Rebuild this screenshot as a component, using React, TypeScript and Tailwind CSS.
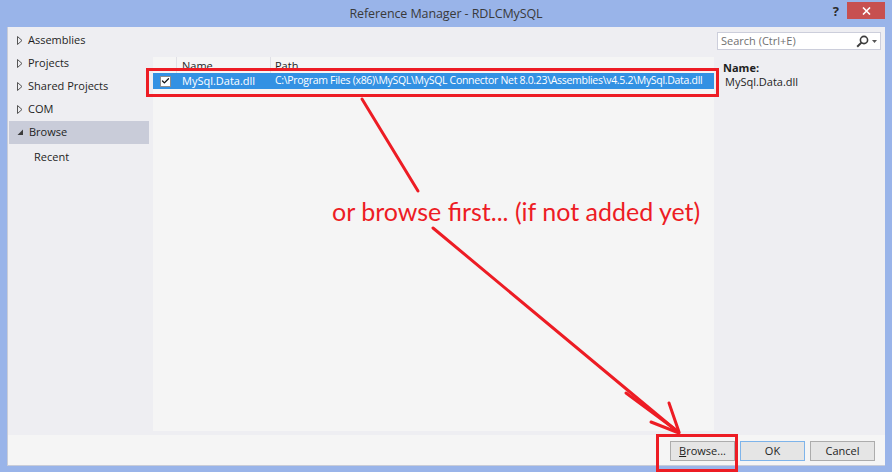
import { Check } from "lucide-react";

const uiFont = { fontFamily: '"Open Sans", "Noto Sans", sans-serif' };

const navItems = [
  { label: "Assemblies", open: false },
  { label: "Projects", open: false },
  { label: "Shared Projects", open: false },
  { label: "COM", open: false },
  { label: "Browse", open: true, selected: true },
];

function Caret({ open }: { open: boolean }) {
  if (open) {
    return (
      <svg width="7" height="7" viewBox="0 0 7 7" className="shrink-0">
        <polygon points="6,0.5 6,6 0.5,6" fill="#3c3c3c" />
      </svg>
    );
  }
  return (
    <svg width="6" height="9" viewBox="0 0 6 9" className="shrink-0">
      <polygon points="0.5,0.5 5,4.5 0.5,8.5" fill="none" stroke="#555" strokeWidth="1" />
    </svg>
  );
}

function SearchIcon() {
  return (
    <svg width="13" height="13" viewBox="0 0 13 13">
      <circle cx="8" cy="5" r="3.6" fill="none" stroke="#3c3c3c" strokeWidth="1.6" />
      <line x1="5.4" y1="7.6" x2="1.2" y2="11.8" stroke="#3c3c3c" strokeWidth="2" />
    </svg>
  );
}

function Btn({ label, def, underline }: { label: string; def?: boolean; underline?: string }) {
  return (
    <div
      className={`flex h-[20px] w-[65px] items-center justify-center border text-[11px] text-[#1e1e1e] ${
        def ? "border-[#7eb4ea] bg-[#e5e5e5]" : "border-[#acacac] bg-[#e5e5e5]"
      }`}
    >
      {underline ? (
        <span>
          <span className="underline">{underline}</span>
          {label.slice(underline.length)}
        </span>
      ) : (
        label
      )}
    </div>
  );
}

export default function App() {
  return (
    <div
      className="relative flex h-[472px] w-[892px] flex-col overflow-hidden bg-[#99b4e9] px-[7px] pb-[7px]"
      style={uiFont}
    >
      {/* title bar */}
      <div className="grid h-[27px] shrink-0 grid-cols-[1fr_auto_1fr]">
        <div />
        <div className="pt-[5px] text-[12.5px] tracking-[-0.1px] text-[#3a3a3a]">Reference Manager - RDLCMySQL</div>
        <div className="flex items-start justify-end">
          <span className="mr-[8px] mt-[2px] text-[13px] font-bold text-[#2b2b2b]">?</span>
          <div className="mt-[2px] flex h-[17px] w-[38px] items-center justify-center bg-[#c75050]">
            <svg width="9" height="8" viewBox="0 0 9 8">
              <path d="M1 0.5 L8 7.5 M8 0.5 L1 7.5" stroke="#fff" strokeWidth="1.6" />
            </svg>
          </div>
        </div>
      </div>

      {/* client */}
      <div className="flex flex-1 flex-col border-b border-l border-[#c8ccd8] bg-[#eeeef2]">
        <div className="flex flex-1">
          {/* sidebar */}
          <div className="w-[141px] shrink-0 pt-[2px] text-[11px] text-[#1e1e1e]">
            {navItems.map((item) => (
              <div
                key={item.label}
                className={`ml-[1px] flex h-[23px] items-center gap-[5px] pl-[8px] ${
                  item.selected ? "bg-[#c9ccd9]" : ""
                }`}
              >
                <Caret open={item.open} />
                <span>{item.label}</span>
              </div>
            ))}
            <div className="flex h-[26px] items-center pl-[26px]">Recent</div>
          </div>

          {/* main */}
          <div className="flex flex-1 flex-col pl-[4px]">
            <div className="flex h-[30px] shrink-0 justify-end pr-[4px] pt-[5px]">
              <div className="flex h-[18px] w-[164px] items-center justify-between border border-[#cccedb] bg-white pl-[3px] pr-[3px] text-[11px] text-[#717171]">
                <span>Search (Ctrl+E)</span>
                <div className="flex items-center gap-[3px]">
                  <SearchIcon />
                  <svg width="5" height="3" viewBox="0 0 5 3">
                    <polygon points="0,0 5,0 2.5,3" fill="#555" />
                  </svg>
                </div>
              </div>
            </div>

            <div className="flex h-[374px]">
              {/* list */}
              <div className="w-[561px] shrink-0 bg-[#f5f5f5] text-[11px]">
                <div className="flex h-[16px] text-[#1e1e1e]">
                  <div className="w-[24px] shrink-0 border-r border-[#e0e0e6]" />
                  <div className="w-[94px] shrink-0 border-r border-[#e0e0e6] pl-[5px] leading-[18px]">Name</div>
                  <div className="pl-[4px] leading-[18px]">Path</div>
                </div>
                <div className="relative flex h-[16px] items-center bg-[#3391e3] text-white">
                  <div className="flex w-[24px] shrink-0 justify-center pl-[1px]">
                    <div className="flex h-[11px] w-[11px] items-center justify-center border border-[#8e8e8e] bg-white">
                      <Check size={10} strokeWidth={3.5} color="#111" />
                    </div>
                  </div>
                  <div className="w-[94px] shrink-0 pl-[5px]">MySql.Data.dll</div>
                  <div className="shrink-0 whitespace-nowrap pl-[4px] text-[10.5px] tracking-[-0.3px]">
                    C:\Program Files (x86)\MySQL\MySQL Connector Net 8.0.23\Assemblies\v4.5.2\MySql.Data.dll
                  </div>
                  <div className="pointer-events-none absolute -bottom-[8px] -left-[7px] -right-[5px] -top-[5px] border-[3px] border-[#ed1c24]" />
                </div>
              </div>

              {/* details */}
              <div className="flex-1 pl-[9px] pt-[4px] text-[11px] leading-[14px] text-[#1e1e1e]">
                <div className="font-bold">Name:</div>
                <div className="pl-[2px]">MySql.Data.dll</div>
              </div>
            </div>
          </div>
        </div>

        {/* bottom bar */}
        <div className="mt-[4px] flex h-[30px] shrink-0 justify-end gap-[5px] bg-[#f5f5f5] pr-[10px] pt-[6px]">
          <div className="relative">
            <Btn label="Browse..." underline="B" />
            <div className="pointer-events-none absolute -bottom-[7px] -left-[14px] -right-[3px] -top-[7px] border-[3px] border-[#ed1c24]" />
          </div>
          <Btn label="OK" def />
          <Btn label="Cancel" />
        </div>
      </div>

      {/* annotation */}
      <svg className="pointer-events-none absolute left-0 top-0" width="892" height="472">
        <g stroke="#ed1c24" strokeWidth="3" strokeLinecap="round" fill="none">
          <line x1="362" y1="99" x2="418" y2="191" />
          <line x1="433" y1="228" x2="678" y2="432" />
          <line x1="626" y1="393" x2="676" y2="430" />
          <line x1="669" y1="403" x2="679" y2="432" />
          <line x1="651" y1="422" x2="679" y2="433" />
        </g>
      </svg>
      <div
        className="absolute left-[332px] top-[196px] whitespace-nowrap text-[25px] leading-[30px] text-[#ed1c24]"
        style={{ fontFamily: "Lato, sans-serif" }}
      >
        or browse first... (if not added yet)
      </div>
    </div>
  );
}
